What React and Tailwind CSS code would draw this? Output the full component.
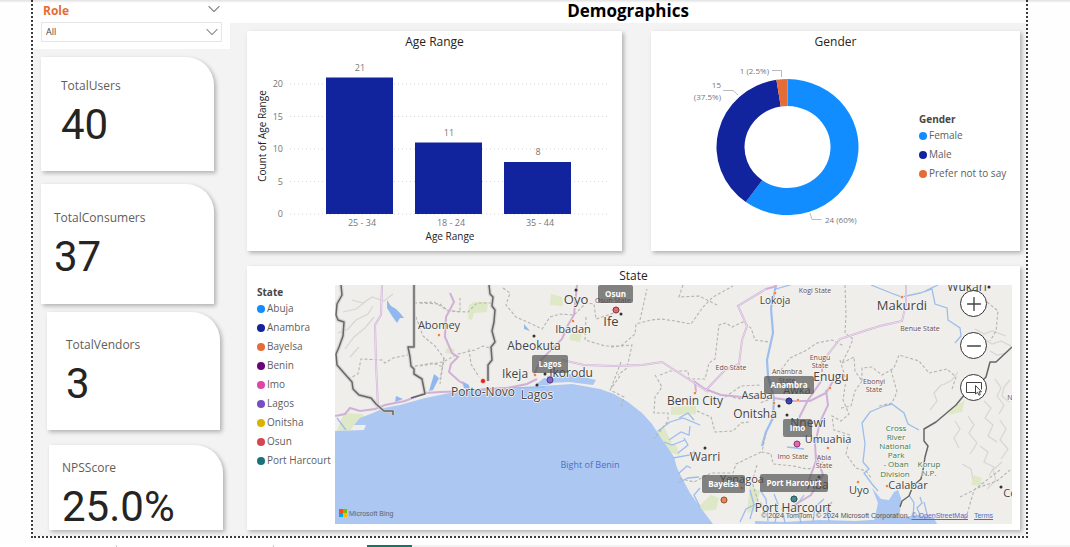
import { ChevronDown, Minus, Plus } from "lucide-react";

const kpis = [
  { label: "TotalUsers", value: "40", box: "mt-2 ml-2 w-[173px] h-[114px] pl-5 pt-5" },
  { label: "TotalConsumers", value: "37", box: "mt-[13px] ml-2 w-[173px] h-[120px] pl-[13px] pt-[25px]" },
  { label: "TotalVendors", value: "3", box: "mt-2 ml-[14px] w-[173px] h-[118px] pl-[19px] pt-6" },
  { label: "NPSScore", value: "25.0%", box: "mt-[15px] ml-4 w-[174px] h-[85px] pl-[13px] pt-[14px]" },
];

const bars = [
  { label: "25 - 34", value: 21, x: 326 },
  { label: "18 - 24", value: 11, x: 415 },
  { label: "35 - 44", value: 8, x: 504 },
];

const genders = [
  ["Female", "bg-[#118dff]"],
  ["Male", "bg-[#12239e]"],
  ["Prefer not to say", "bg-[#e66c37]"],
];

const states = [
  ["Abuja", "bg-[#118dff]"],
  ["Anambra", "bg-[#12239e]"],
  ["Bayelsa", "bg-[#e66c37]"],
  ["Benin", "bg-[#6b007b]"],
  ["Imo", "bg-[#e044a7]"],
  ["Lagos", "bg-[#744ec2]"],
  ["Onitsha", "bg-[#d9b300]"],
  ["Osun", "bg-[#d64550]"],
  ["Port Harcourt", "bg-[#197278]"],
];

const cardShadow = "bg-white shadow-[2px_2px_4px_rgba(0,0,0,0.28)]";

function Legend({ title, items }) {
  return (
    <div className="text-[10px] text-[#605e5c]">
      <h3 className="leading-[14px] font-bold text-[#484644]">{title}</h3>
      <ul>
        {items.map(([name, color]) => (
          <li key={name} className="flex h-[19px] items-center gap-0.5 whitespace-nowrap">
            <span className={`size-2 rounded-full ${color}`} />
            {name}
          </li>
        ))}
      </ul>
    </div>
  );
}

function BarChart() {
  return (
    <svg viewBox="247 52 375 199" className="block w-full" role="img" aria-label="Count of Age Range by Age Range">
      {[0, 5, 10, 15, 20].map((t) => {
        const y = 214 - t * 6.5;
        return (
          <g key={t}>
            <line x1="290" x2="610" y1={y} y2={y} stroke="#d4d4d4" strokeDasharray="1 3" />
            <text x="283" y={y + 3} textAnchor="end" fontSize="9" fill="#777">{t}</text>
          </g>
        );
      })}
      {bars.map((b) => (
        <g key={b.label} textAnchor="middle" fontSize="9" fill="#777">
          <rect x={b.x} y={214 - b.value * 6.5} width="67" height={b.value * 6.5} fill="#12239e" />
          <text x={b.x + 34} y={207 - b.value * 6.5}>{b.value}</text>
          <text x={b.x + 36} y="226">{b.label}</text>
        </g>
      ))}
      <text x="450" y="240" textAnchor="middle" fontSize="10" fill="#252423">Age Range</text>
      <text transform="translate(266 136) rotate(-90)" textAnchor="middle" fontSize="10" fill="#252423">Count of Age Range</text>
    </svg>
  );
}

function arc(start, end) {
  const p = (f, rx, ry) => [
    787.5 + rx * Math.sin(f * 2 * Math.PI),
    147 - ry * Math.cos(f * 2 * Math.PI),
  ];
  const big = end - start > 0.5 ? 1 : 0;
  return `M${p(start, 71, 68)}A71 68 0 ${big} 1 ${p(end, 71, 68)}L${p(end, 43, 41)}A43 41 0 ${big} 0 ${p(start, 43, 41)}Z`;
}

function DonutChart() {
  return (
    <svg viewBox="651 52 268 198" className="block w-full" role="img" aria-label="Users by gender">
      <path d={arc(0, 0.6)} fill="#118dff" />
      <path d={arc(0.6, 0.975)} fill="#12239e" />
      <path d={arc(0.975, 1)} fill="#e66c37" />
      <g fill="none" stroke="#bbb">
        <path d="M772 70.500H781.500V77" />
        <path d="M723 90.500H733L738 95" />
        <path d="M810 213L812 219.500H821.500" />
      </g>
      <g fontSize="8" fill="#777">
        <text x="769" y="74" textAnchor="end">1 (2.5%)</text>
        <text x="721" y="88" textAnchor="end">15</text>
        <text x="721" y="100" textAnchor="end">(37.5%)</text>
        <text x="825" y="223">24 (60%)</text>
      </g>
    </svg>
  );
}

const places = [
  ["Abomey", 439, 329, 11], ["Oyo", 576, 304, 13], ["Ibadan", 573, 333, 11], ["Ife", 611, 326, 13],
  ["Abeokuta", 534, 350, 12], ["Ikeja", 515, 378, 12], ["Ikorodu", 571, 377, 12],
  ["Porto-Novo", 483, 396, 12], ["Lagos", 537, 399, 12], ["Lokoja", 775, 304, 10],
  ["Makurdi", 902, 310, 13], ["Wukari", 967, 291, 12], ["Enugu", 831, 381, 12],
  ["Asaba", 757, 399, 11], ["Awka", 797, 394, 11], ["Onitsha", 755, 418, 12],
  ["Benin City", 695, 405, 12], ["Nnewi", 808, 427, 12], ["Umuahia", 828, 443, 11],
  ["Warri", 705, 461, 12], ["Yenagoa", 742, 483, 11], ["Aba", 818, 489, 12],
  ["Port Harcourt", 793, 512, 12], ["Uyo", 859, 494, 11], ["Calabar", 908, 489, 11], ["Co", 1010, 497, 11],
];

const regions = [
  ["Osun State", 613, 303], ["Kogi State", 815, 293], ["Benue State", 920, 331], ["Edo State", 731, 370],
  ["Enugu", 820, 360], ["State", 820, 368], ["Anambra", 787, 374], ["State", 787, 383],
  ["Ebonyi", 874, 384], ["State", 874, 392], ["Imo State", 793, 459], ["Abia", 824, 460], ["State", 824, 468], ["N", 1010, 400],
];

const parks = [
  ["Cross", 896, 431], ["River", 896, 440], ["National", 895, 449], ["Park", 896, 458],
  ["- Oban", 896, 467], ["Division", 895, 477], ["Korup", 929, 467], ["N.P.", 929, 476],
];

const towns = [
  [576, 290], [621, 314], [534, 336], [545, 374], [537, 385], [705, 448], [779, 406], [787, 415],
  [819, 477], [989, 287], [1001, 487],
];

const capitals = [
  [439, 335], [573, 321], [535, 375], [775, 293], [902, 297], [695, 393], [774, 403], [798, 400],
  [830, 388], [742, 488], [828, 448], [858, 482], [887, 486],
];

const pins = [
  { name: "Osun", x: 598, y: 285, w: 35, px: 616, py: 310, fill: "#d64550" },
  { name: "Lagos", x: 532, y: 355, w: 36, px: 550, py: 380, fill: "#744ec2" },
  { name: "Anambra", x: 764, y: 376, w: 50, px: 789, py: 401, fill: "#12239e" },
  { name: "Imo", x: 783, y: 419, w: 29, px: 797, py: 444, fill: "#e044a7" },
  { name: "Bayelsa", x: 702, y: 475, w: 43, px: 724, py: 500, fill: "#e66c37" },
  { name: "Port Harcourt", x: 760, y: 474, w: 68, px: 794, py: 499, fill: "#197278" },
];

const hills = [
  "M338 333l10-4 8-9 12-6 5-8", "M345 349l9-12 11-9 9-11", "M352 300l11 3 9-6 12 4 9-7", "M343 312l13-3 8-6", "M350 357l9-10",
  "M984 339l8 5 9-3 10 5", "M990 351l7 4 10-2", "M995 379l6 9-4 8 7 9-5 9", "M984 401l7 7-6 10 8 7-5 11 9 6",
  "M968 416l6 9-5 8 8 10-7 11", "M942 384l-8 9 3 8-7 9", "M958 372l-6 8-9 5", "M1000 420l6 9-6 11 8 9-7 10", "M980 446l8 6-4 10 10 5-5 9",
  "M955 421l5 8-6 9 5 10", "M962 464l9 5 2 10 9 5", "M1002 462l-9 8 3 10-9 9", "M975 329l9 5 8-3 14 5", "M1009 402l-7-6 2-9 6-7",
];

function BingMap() {
  return (
    <svg viewBox="335 285 677 239" preserveAspectRatio="xMidYMid slice" className="block h-[239px] w-full" role="img" aria-label="Map of southern Nigeria">
      <rect x="335" y="285" width="677" height="239" fill="#efeeeb" />
      <g fill="none" stroke="#bbbab7" strokeWidth="1.200" opacity="0.45">
        {hills.map((d) => <path key={d} d={d} />)}
      </g>
      <g fill="#dce7c1" opacity="0.85">
        <path d="M344 413l18 1 4 5-12 6-3 5-14 1z" />
        <path d="M474 302h14l-1 10-13 1-2 7-4-1 1-14z" />
        <path d="M551 294l11 3 1 9-13-1z" />
        <path d="M571 334l11-1-2 9-11-2z" />
        <path d="M447 348l8 1-2 5-8-1z" />
        <path d="M671 407l25-1v8l-25 1z" />
        <path d="M656 431l8-4 8 16-6 2zM664 443l12 2 4 11-10-4z" />
        <path d="M711 495l8 3-3 12-14 1-4-4zM750 486l10 5-5 20-8 2z" />
        <path d="M951 409l14-9-3 12-14 3zM974 475l8 3-2 8-9-1z" />
      </g>
      <path d="M335 431L364 430 366 425 354 425 360 418 373 413 384 408 400 405 425 398 450 393 480 390 512 388 542 386 572 384 600 389 614 394 628 402 642 413 652 424 661 438 668 448 674 457 677 468 683 480 690 493 700 507 713 524H335Z" fill="#abc7f2" />
      <path d="M872 488l9 11 8 1 5-8 4-2 3 8-1 14-4 9h-22l4-18zM755 521l30 1 35-2 35 1 33-2 30-4 16 3 3 6H755z" fill="#abc7f2" />
      <path d="M547 376l24-2 25 6-3 5-24-3-20 1zM560 380l-12 5-14 1 10-8z" fill="#abc7f2" />
      <path d="M387 300l4 6 5 3 4 4 4 5-4 0-3 5-5-7-5-8zM434 374l5 4-6 12-4 1zM462 381l7 4 1 5-6-2zM396 396l7 3-8 3zM524 324l6 7-6-2z" fill="#91b8ee" />
      <g fill="none" stroke="#9dbdec" strokeWidth="1.300">
        <path d="M776 285l-5 23 2 25-6 27 1 16 6 22-1 20-7 14-4 14" strokeWidth="2.200" />
        <path d="M776 289l17-5M871 285l20 8 11 4 18-4 12-4 3 15 12 4 1 12 12 8 1 8-6 7M925 291l13-6" />
        <path d="M804 449l-17-2M862 423l8-11 14-6 8-2 12 9 4 11 11 6M862 423l3 21-2 18 6 7-5 4 8 11 6 7" />
        <path d="M658 431l12-9 13-4 17 7M669 440l12-8 8 3 1-9M678 453l10-8-4-7M673 458l17-3 5-4M678 474l9-8 4 2M664 442l8 3 13-5" />
        <path d="M678 483l10-5 11-1M700 507l-6-12 6-7M750 490l4 15-4 14M768 521l-2-22-6-9M775 523l3-19-4-10M785 523l-3-15M740 522l6-13 12-6M801 523l-4-18 7-10M813 522l2-15 9-8M829 522l-2-14 5-6" />
        <path d="M913 517l1-14-5-8M921 517l-4-9 5-5-2-6M928 518l-4-16M679 418l9-5 6 7" />
        <path d="M500 388l45-1M346 430l-9-12" />
      </g>
      <g fill="none" stroke="#b5b4b1" strokeDasharray="3 2" strokeWidth="1.100">
        <path d="M348 379l10-5 3-15 21 1 3 3 8-5 15-3M414 303l20-1 13 8 13 2v-14M414 312l9 24 12 10 9 12-4 26M410 367l23-4 10 4" />
        <path d="M420 303l20 1 8 7 20 1 9-9 14 0M420 366l23-4 15-8 17-4 8-4 10 3M444 358l-4 22M469 349l2 15 8 13" />
        <path d="M503 288l7 5-4 12 10 12 16 7 10 5 8-12 10-3 14 1 12-12 8 1 2 15 18-6M586 317l-1 23 20 6 16 0 14-12 1-10 15-4 10-1 14 2 16 3 12-17 10-10 20-11M640 320l7-31M683 285l-4 12 20-1 18 9M611 347l21-2-5 23-9 7M620 376l-10 14 14 7-3 11M621 362l-10 26" />
        <path d="M660 375l10-4 18 0 1 8 16 0 4-16 6-4 4-34 7-2 6 4 11-5 8 6 4 12 14 2M655 375l7 12-7 10-1 16 14 0 0 8-14 18M697 411l14 6 4 15 18-1 8-8 8-1M741 399l-10-2M721 400l20-14 20-1M773 398l-13 5" />
        <path d="M781 370l9-12 15-7 12-8 15-3 12 6M845 285l1 30-1 18 8 6-4 10-7 14M842 363l12-6 1 14 7 10 0-13 10-1 10 8 12-7 5-13 20 6 10 12 18-4 9 8-4 12M891 370l6 22-5 11-13 3M862 381l-7 10-4 15-10 2" />
        <path d="M840 360l6 20-3 20 6 14-8 7-9-5 2 14 16 5-4 19 10 14 10 3 6 8M766 432l-4 20 9 2 2 10 20 2 14 3 12-2 6-8M761 452l-25 12-3 9-22 0-17 9-16-4M757 465l-5 17 6 19 6 5M987 302l11 9-2 20-6 10M960 497l20-10 17-6 13-11M1000 470l-26 20-8 28" />
      </g>
      <g fill="none" stroke="#d0b0d6" strokeWidth="2">
        <path d="M382 285l-1 30-6 10 1 38 2 45M450 293l4 9-8 15-1 20 7 16 6 4-7 7-2 8 10 9 5 3M577 285l-3 30-6 10-6 14-22 22-6 14" />
        <path d="M335 416l10-2 5-6 10 3 15-2 10-4 20-4 20-8 15-1 30-1 15-2 22-1 20-4 10-5M562 360l22 5 30 1 28-1 20-3 17 11 17 11 12 8" />
        <path d="M696 392l-1-10 10 7 16 6 21 2 32 1 20 3 16 0 16-8 7-12" />
        <path d="M706 390l19-20 14-6 3-24 5-14-9-20 28-17 11-3M906 285l0 19-4 17-22 5-16 5-24 8-18 23 0 10M826 390l2 15-8 17-5 22 1 17-9 24M822 380l-14 20-9 18M816 455l7 20-12 20-20 12" />
      </g>
      <g fill="none" stroke="#efe6f0" strokeWidth="0.800">
        <path d="M382 285l-1 30-6 10 1 38 2 45M562 360l22 5 30 1 28-1 20-3 17 11 17 11 12 8" />
        <path d="M706 390l19-20 14-6 3-24 5-14-9-20 28-17M906 285l0 19-4 17-22 5-16 5-24 8-18 23" />
      </g>
      <g fill="none" strokeLinejoin="round">
        <g stroke="#cfcecb" strokeWidth="4" opacity="0.7">
          <path d="M341 285l1 10-5 9-1 11 2 5 6 2-1 14-4 11-3 7 1 11 7 8 8 9 1 7 6 6 12 3 5 6 8 7h9v4" />
          <path d="M414 285v62h-6l2 10 1 9 3 3 0 5 8 5 3 15M489 285l1 9 3 3-1 9 3 4-1 12-2 9 3 11-4 5 1 13-4 5 0 16" />
        </g>
        <g stroke="#666" strokeWidth="1.500">
          <path d="M341 285l1 10-5 9-1 11 2 5 6 2-1 14-4 11-3 7 1 11 7 8 8 9 1 7 6 6 12 3 5 6 8 7h9v4" />
          <path d="M414 285v62h-6l2 10 1 9 3 3 0 5 8 5 3 15-14 4M489 285l1 9 3 3-1 9 3 4-1 12-2 9 3 11-4 5 1 13-4 5 0 16" />
          <path d="M1012 347l-16 15-6 0-4 15-9 9-12 8-9 11-20 17-12 7 0 12 4 5-3 11-2 13-2 9-8 7-4 10-7 5-2 6" />
        </g>
      </g>
      <g textAnchor="middle" stroke="#f5f4f2" strokeWidth="1.500" strokeLinejoin="round" style={{ paintOrder: "stroke" }}>
        {regions.map(([t, x, y]) => <text key={`${t}${x}`} x={x} y={y} fontSize="7" fill="#6b4a4c">{t}</text>)}
        {parks.map(([t, x, y]) => <text key={t} x={x} y={y} fontSize="8" fill="#3f7a4a">{t}</text>)}
        {places.map(([t, x, y, s]) => <text key={t} x={x} y={y} fontSize={s} fill="#444">{t}</text>)}
      </g>
      <text x="590" y="468" textAnchor="middle" fontSize="9" fill="#4a6fc8">Bight of Benin</text>
      {towns.map(([x, y]) => <circle key={`${x}-${y}`} cx={x} cy={y} r="1.500" fill="#333" />)}
      {capitals.map(([x, y]) => <circle key={`${x}-${y}`} cx={x} cy={y} r="1.500" fill="#f76a1c" stroke="#fff" strokeWidth="0.500" />)}
      <circle cx="483" cy="381" r="2.500" fill="#e3231b" stroke="#fff" strokeWidth="0.500" />
      {pins.map((p) => (
        <g key={p.name}>
          <circle cx={p.px} cy={p.py} r="3" fill={p.fill} fillOpacity="0.8" stroke={p.fill} />
          <circle cx={p.px} cy={p.py} r="3" fill="none" stroke="#333" strokeOpacity="0.45" />
          <rect x={p.x} y={p.y} width={p.w} height="18" rx="2" fill="#4c4c4c" fillOpacity="0.68" />
          <text x={p.x + p.w / 2} y={p.y + 12} textAnchor="middle" fontSize="8" fontWeight="700" fill="#fff">{p.name}</text>
        </g>
      ))}
      <path fill="#f25022" d="M339 509h4v4h-4z" />
      <path fill="#7fba00" d="M343 509h4v4h-4z" />
      <path fill="#00a4ef" d="M339 513h4v4h-4z" />
      <path fill="#ffb900" d="M343 513h4v4h-4z" />
      <text x="349" y="516" fontSize="7" fill="#60646c" className="font-['Liberation_Sans',sans-serif]">Microsoft Bing</text>
    </svg>
  );
}

function MapButton({ label, children }) {
  return (
    <button type="button" aria-label={label} className="flex size-[27px] items-center justify-center rounded-full border border-[#333] bg-white text-[#444]">
      {children}
    </button>
  );
}

export default function App() {
  return (
    <div className="relative flex min-h-screen flex-col bg-[#fefefe] font-['Open_Sans','Noto_Sans',sans-serif] text-[#252423]">
      <div className="pointer-events-none absolute inset-x-0 top-0 z-10 h-[3px] bg-linear-to-b from-black/12 to-transparent" />
      <main className="mr-[42px] ml-[31px] flex flex-1 border-2 border-t-0 border-dotted border-[#3b3b3b] bg-[#f3f3f3] bg-clip-padding">
        <aside className="w-[197px] shrink-0">
          <section className="h-[49px] bg-white px-2 pt-[3px]">
            <div className="flex h-[15px] items-center justify-between px-0.5">
              <label htmlFor="role" className="text-[12px] font-bold text-[#e66c37]">Role</label>
              <button type="button" aria-label="Collapse Role" className="-mt-1 text-[#777]">
                <ChevronDown className="h-2 w-3" viewBox="5 7.500 14 9" strokeWidth={1.2} />
              </button>
            </div>
            <div className="relative mt-1">
              <select id="role" defaultValue="All" className="block h-5 w-full appearance-none rounded-none border border-[#e6e6e6] bg-white pl-1 text-[9px] text-[#484644]">
                <option>All</option>
              </select>
              <ChevronDown className="pointer-events-none absolute top-1.5 right-1 h-2 w-3 text-[#888]" viewBox="5 7.500 14 9" strokeWidth={1.2} />
            </div>
          </section>
          {kpis.map((k) => (
            <section key={k.label} className={`rounded-tr-[28px] ${cardShadow} ${k.box}`}>
              <h2 className="text-[12px] leading-[18px] text-[#605e5c]">{k.label}</h2>
              <p className="mt-2 font-[Roboto,sans-serif] text-[42px] leading-[44px]">{k.value}</p>
            </section>
          ))}
        </aside>
        <div className="min-w-0 flex-1">
          <header className="h-[23px] bg-white">
            <h1 className="text-center text-[17px] leading-[21px] font-bold text-black">Demographics</h1>
          </header>
          <div className="grid grid-cols-[375fr_369fr] gap-x-[29px] gap-y-[15px] pt-2 pr-[6px] pb-[6px] pl-[17px]">
            <section className={cardShadow}>
              <h2 className="h-[21px] text-center text-[12px] leading-[22px]">Age Range</h2>
              <BarChart />
            </section>
            <section className={cardShadow}>
              <h2 className="h-[21px] text-center text-[12px] leading-[22px]">Gender</h2>
              <div className="grid grid-cols-[268fr_101fr]">
                <DonutChart />
                <div className="min-w-0 pt-[60px]">
                  <Legend title="Gender" items={genders} />
                </div>
              </div>
            </section>
            <section className={`col-span-2 h-[264px] ${cardShadow}`}>
              <h2 className="h-[19px] text-center text-[12px] leading-[19px]">State</h2>
              <div className="flex pr-2">
                <div className="w-[88px] shrink-0 pl-[10px]">
                  <Legend title="State" items={states} />
                </div>
                <div className="relative min-w-0 flex-1">
                  <BingMap />
                  <div className="absolute top-[5px] right-[25px] flex flex-col gap-[15px]">
                    <MapButton label="Zoom in"><Plus size={22} strokeWidth={1.5} /></MapButton>
                    <MapButton label="Zoom out"><Minus size={22} strokeWidth={1.5} /></MapButton>
                    <MapButton label="Select area">
                      <svg viewBox="0 0 20 16" className="h-4 w-5" fill="none" stroke="currentColor">
                        <path d="M11 12.500H2.500V2.500h15v7" />
                        <path d="M11.500 5.500v8.500l2-1.700 1.500 3 1.300-.8-1.300-2.700h2.500z" fill="#fff" />
                      </svg>
                    </MapButton>
                  </div>
                  <p className="absolute right-[19px] bottom-[3px] font-['Liberation_Sans',sans-serif] text-[7px] leading-[10px] whitespace-nowrap text-[#555]">
                    © 2024 TomTom, © 2024 Microsoft Corporation,{" "}
                    <a href="#osm" className="text-[#4a6fc8] underline">© OpenStreetMap</a>{" "}
                    <a href="#terms" className="ml-1 text-[#4a6fc8] underline">Terms</a>
                  </p>
                </div>
              </div>
            </section>
          </div>
        </div>
      </main>
      <div className="mt-[7px] flex h-[2px] bg-[#f1f1f1]">
        <div className="w-[117px] border-r border-[#c8c8c8] bg-white" />
        <div className="w-[157px] border-r border-[#c8c8c8] bg-white" />
        <div className="w-[93px] bg-white" />
        <div className="w-[45px] bg-[#117865]" />
      </div>
    </div>
  );
}
